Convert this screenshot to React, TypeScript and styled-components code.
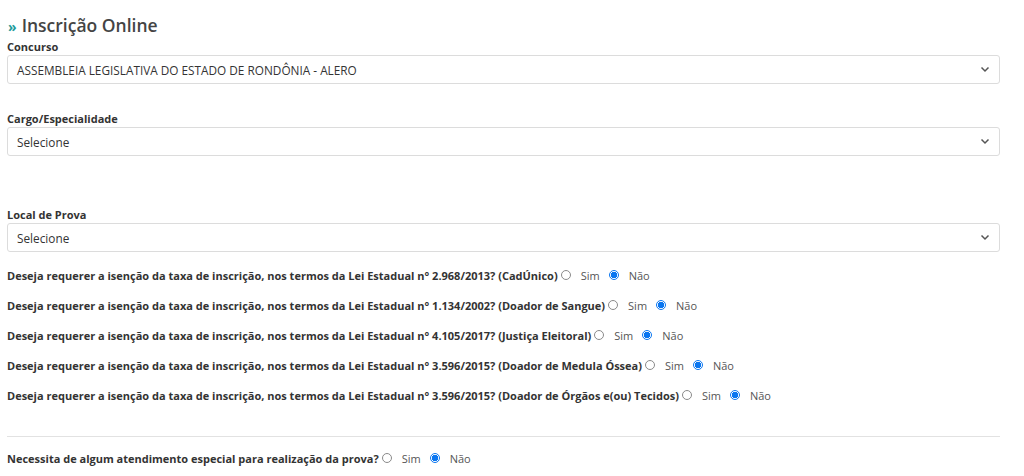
import React from "react";
import styled, { createGlobalStyle } from "styled-components";

const GlobalStyle = createGlobalStyle`
  body {
    margin: 0;
    background: #ffffff;
    font-family: "Open Sans", "Noto Sans", sans-serif;
    color: #333333;
  }
`;

const Page = styled.div`
  padding: 12px 24px 0 7px;
  width: 993px;
`;

const Title = styled.h2`
  margin: 0 0 0 1px;
  font-size: 17.5px;
  font-weight: 600;
  color: #444444;
  line-height: 26px;
  span {
    color: #1f9b9b;
    font-size: 14px;
    font-weight: 700;
    margin-right: 5px;
  }
`;

const Field = styled.div<{ $gap: number }>`
  margin-bottom: ${(p) => p.$gap}px;
`;

const Label = styled.label`
  display: block;
  font-size: 11px;
  font-weight: 700;
  color: #333333;
  line-height: 14px;
  margin-bottom: 1px;
`;

const SelectBox = styled.div`
  box-sizing: border-box;
  height: 29px;
  border: 1px solid #dcdcdc;
  border-radius: 3px;
  display: flex;
  align-items: center;
  justify-content: space-between;
  padding: 0 9px 0 9px;
  font-size: 11.8px;
  color: #333333;
`;

const Question = styled.div`
  display: flex;
  align-items: center;
  height: 30px;
  font-size: 11px;
  color: #333333;
`;

const QText = styled.span`
  font-weight: 700;
  margin-right: 3px;
`;

const Radio = styled.span<{ $checked?: boolean }>`
  width: 10px;
  height: 10px;
  box-sizing: border-box;
  border-radius: 50%;
  border: 1px solid ${(p) => (p.$checked ? "#0a76f0" : "#8a8a8a")};
  background: ${(p) =>
    p.$checked ? "radial-gradient(circle, #0a76f0 0 3px, #fff 3.5px)" : "#fff"};
  margin: 0 10px 0 0;
  flex: none;
`;

const Option = styled.span`
  color: #555555;
  margin-right: 9px;
`;

const Divider = styled.hr`
  border: none;
  border-top: 1px solid #e2e2e2;
  margin: 26px 0 6px;
`;

function Chevron() {
  return (
    <svg width="10" height="7" viewBox="0 0 10 7">
      <path d="M1.5 1.5 L5 5 L8.5 1.5" fill="none" stroke="#555" strokeWidth="1.5" />
    </svg>
  );
}

function Select(props: { value: string }) {
  return (
    <SelectBox>
      <span>{props.value}</span>
      <Chevron />
    </SelectBox>
  );
}

function YesNo(props: { text: string }) {
  return (
    <Question>
      <QText>{props.text}</QText>
      <Radio />
      <Option>Sim</Option>
      <Radio $checked />
      <Option>Não</Option>
    </Question>
  );
}

const base = "Deseja requerer a isenção da taxa de inscrição, nos termos da Lei Estadual n° ";

export default function App() {
  return (
    <>
      <GlobalStyle />
      <Page>
        <Title>
          <span>»</span>Inscrição Online
        </Title>
        <Field $gap={28}>
          <Label>Concurso</Label>
          <Select value="ASSEMBLEIA LEGISLATIVA DO ESTADO DE RONDÔNIA - ALERO" />
        </Field>
        <Field $gap={52}>
          <Label>Cargo/Especialidade</Label>
          <Select value="Selecione" />
        </Field>
        <Field $gap={8}>
          <Label>Local de Prova</Label>
          <Select value="Selecione" />
        </Field>
        <YesNo text={base + "2.968/2013? (CadÚnico)"} />
        <YesNo text={base + "1.134/2002? (Doador de Sangue)"} />
        <YesNo text={base + "4.105/2017? (Justiça Eleitoral)"} />
        <YesNo text={base + "3.596/2015? (Doador de Medula Óssea)"} />
        <YesNo text={base + "3.596/2015? (Doador de Órgãos e(ou) Tecidos)"} />
        <Divider />
        <YesNo text="Necessita de algum atendimento especial para realização da prova?" />
      </Page>
    </>
  );
}
